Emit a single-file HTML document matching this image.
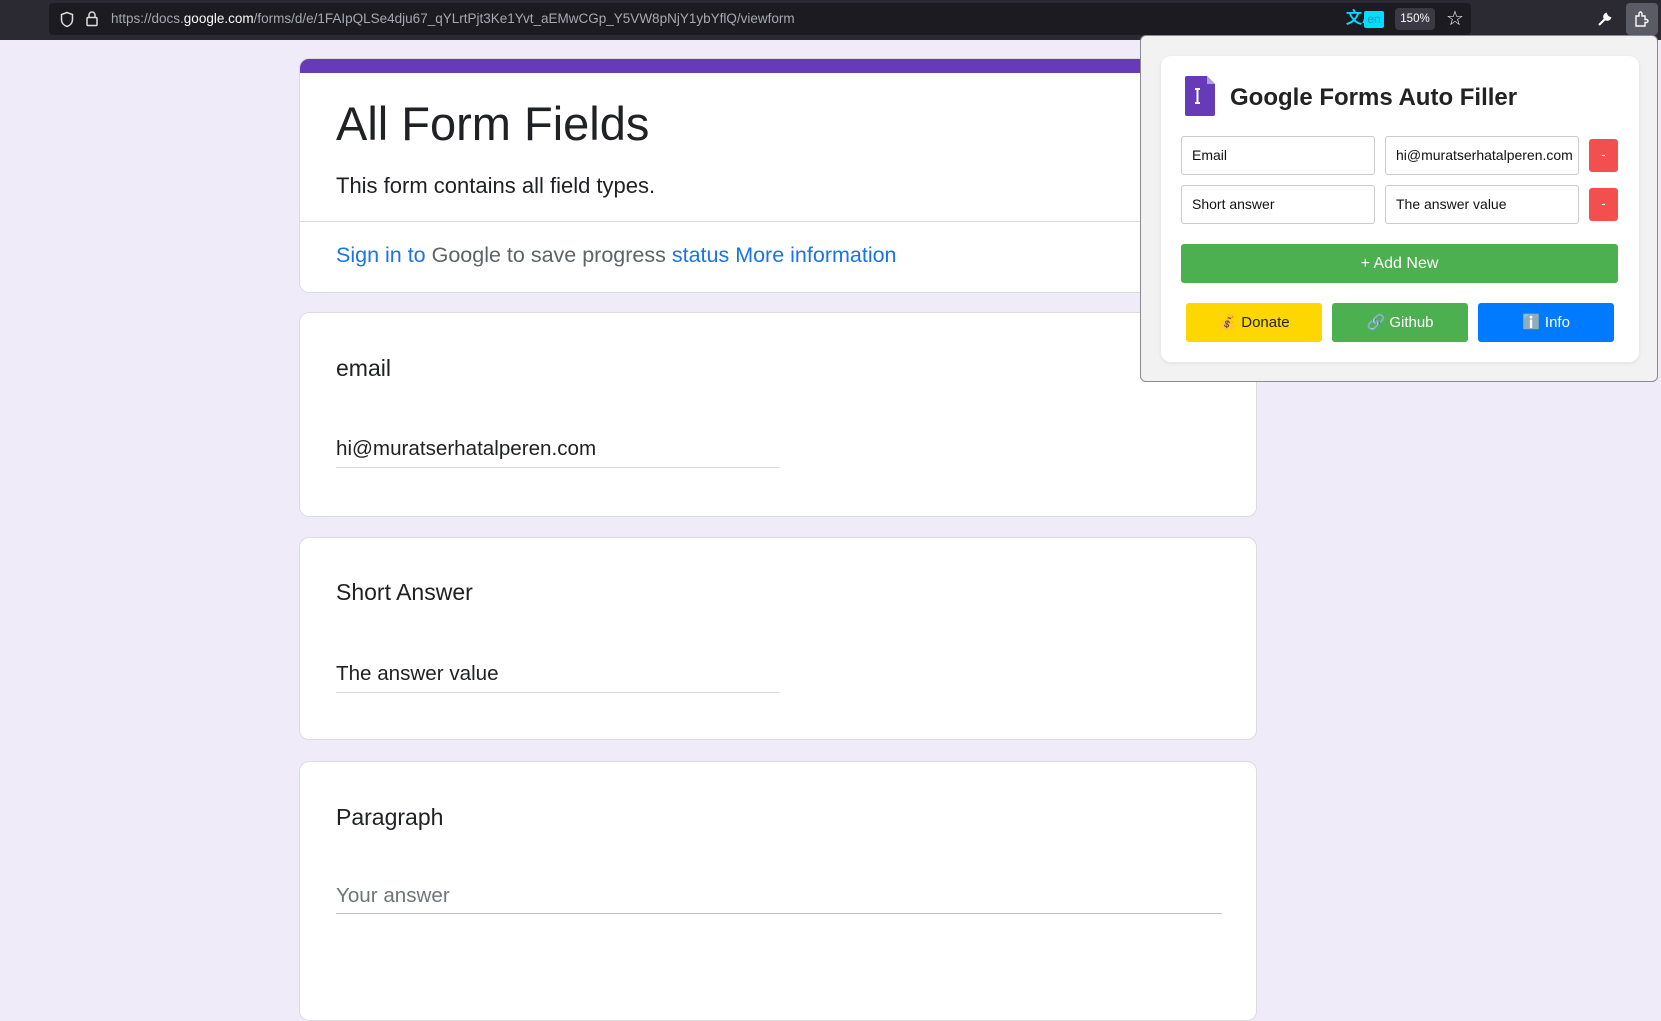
<!DOCTYPE html>
<html><head><meta charset="utf-8"><style>
*{box-sizing:border-box;margin:0;padding:0}
body{width:1661px;height:959px;overflow:hidden;background:#f0ebf8;font-family:"Liberation Sans",Arial,sans-serif;position:relative;color:#202124}
.top{position:absolute;left:0;top:0;width:1661px;height:40px;background:#2b2a33}
.url{position:absolute;left:49px;top:3px;width:1422px;height:32px;background:#1c1b22;border-radius:4px;color:#a8a8b0;font-size:13.5px;line-height:32px}
.card{position:absolute;left:299px;width:958px;background:#fff;border:1px solid #dadce0;border-radius:10px}
.t{position:absolute;left:36px;font-size:23px;color:#202124}
.ans{position:absolute;left:36px;font-size:20.6px}
.line{position:absolute;left:36px;height:1px;background:#dadce0}
.pop{position:absolute;left:1140px;top:35px;width:518px;height:347px;background:#f2f2f3;border:1px solid #8a8a8f;border-radius:6px}
.in{position:absolute;left:20px;width:478px;height:306px;top:20px;background:#fff;border-radius:10px;box-shadow:0 1px 4px rgba(0,0,0,.08)}
.inp{position:absolute;height:39px;width:194px;border:1px solid #ccc;border-radius:3px;font-size:14px;line-height:37px;padding-left:10px;color:#111;white-space:nowrap;overflow:hidden}
.mn{position:absolute;width:29px;height:33px;background:#f44f4f;border-radius:3px;color:#fff;text-align:center;line-height:31px;font-size:13px}
.b{position:absolute;top:247px;height:39px;border-radius:3px;text-align:center;line-height:39px;font-size:15px}
</style></head><body>
<div class="top">
<div class="url">
<svg style="position:absolute;left:10px;top:8px" width="16" height="17" viewBox="0 0 16 17"><path d="M8 1.5L2.5 3.5v5c0 3.5 2.5 6 5.5 7 3-1 5.5-3.5 5.5-7v-5z" fill="none" stroke="#ddd" stroke-width="1.5"/></svg>
<svg style="position:absolute;left:36px;top:7px" width="14" height="17" viewBox="0 0 14 17"><rect x="2" y="7.5" width="10" height="8" rx="1" fill="none" stroke="#ddd" stroke-width="1.5"/><path d="M4 7.5V5a3 3 0 0 1 6 0v2.5" fill="none" stroke="#ddd" stroke-width="1.5"/></svg>
<span style="position:absolute;left:62px">https://docs.<span style="color:#fbfbfe">google.com</span>/forms/d/e/1FAIpQLSe4dju67_qYLrtPjt3Ke1Yvt_aEMwCGp_Y5VW8pNjY1ybYflQ/viewform</span>
<span style="position:absolute;left:1297px;color:#00ddff;font-size:16px;font-weight:bold">文A</span>
<span style="position:absolute;left:1315px;top:8px;width:20px;height:17px;background:#00ddff;color:#1c9bb3;font-size:12px;line-height:17px;text-align:center;border-radius:2px">en</span>
<span style="position:absolute;left:1346px;top:5px;width:40px;height:22px;background:#3a3944;border-radius:4px;color:#fbfbfe;font-size:11.5px;line-height:22px;text-align:center">150%</span>
<span style="position:absolute;left:1397px;color:#fbfbfe;font-size:20px">☆</span>
</div>
<svg style="position:absolute;left:1597px;top:11px" width="16" height="16" viewBox="0 0 16 16"><path d="M2 14l6-6M9 3a3 3 0 1 0 4 4l-2-1-1-1z" stroke="#fbfbfe" stroke-width="2.2" fill="#fbfbfe"/></svg>
<div style="position:absolute;left:1626px;top:3px;width:32px;height:32px;background:#5b5b66;border-radius:4px"><svg style="position:absolute;left:7px;top:7px" width="18" height="18" viewBox="0 0 18 18"><path d="M3 6h3V3.5a1.5 1.5 0 0 1 3 0V6h3v3.5h1.5a1.5 1.5 0 0 1 0 3H12V16H3z" fill="none" stroke="#fbfbfe" stroke-width="1.4"/></svg></div>
</div>

<div class="card" style="top:58px;height:235px;overflow:hidden">
<div style="position:absolute;left:0;top:0;width:100%;height:14px;background:#673ab7"></div>
<div style="position:absolute;left:36px;top:37px;font-size:47px">All Form Fields</div>
<div style="position:absolute;left:36px;top:114px;font-size:22px">This form contains all field types.</div>
<div style="position:absolute;left:0;top:162px;width:100%;height:1px;background:#dadce0"></div>
<div style="position:absolute;left:36px;top:184px;font-size:21.5px;color:#5f6368"><span style="color:#1a73e8">Sign in to</span> Google to save progress <span style="color:#1a73e8">status More information</span></div>
</div>

<div class="card" style="top:312px;height:205px">
<div class="t" style="top:42px">email</div>
<div class="ans" style="top:124px">hi@muratserhatalperen.com</div>
<div class="line" style="top:154px;width:444px"></div>
</div>
<div class="card" style="top:537px;height:203px">
<div class="t" style="top:41px">Short Answer</div>
<div class="ans" style="top:124px">The answer value</div>
<div class="line" style="top:154px;width:444px"></div>
</div>
<div class="card" style="top:761px;height:260px">
<div class="t" style="top:42px">Paragraph</div>
<div class="ans" style="top:122px;color:#70757a">Your answer</div>
<div class="line" style="top:151px;width:886px;background:#bdc1c6"></div>
</div>

<div class="pop"><div class="in">
<svg style="position:absolute;left:24px;top:20px" width="30" height="40" viewBox="0 0 30 40"><path d="M2 0h20l8 8v30a2 2 0 0 1-2 2H2a2 2 0 0 1-2-2V2a2 2 0 0 1 2-2z" fill="#673ab7"/><path d="M22 0l8 8h-8z" fill="#b39ddb"/><path d="M10 13h5M12.5 13v14M10 27h5" stroke="#fff" stroke-width="2"/></svg>
<div style="position:absolute;left:69px;top:28px;font-size:24px;font-weight:bold;color:#222">Google Forms Auto Filler</div>
<div class="inp" style="left:20px;top:80px">Email</div>
<div class="inp" style="left:224px;top:80px">hi@muratserhatalperen.com</div>
<div class="mn" style="left:428px;top:83px">-</div>
<div class="inp" style="left:20px;top:129px">Short answer</div>
<div class="inp" style="left:224px;top:129px">The answer value</div>
<div class="mn" style="left:428px;top:132px">-</div>
<div style="position:absolute;left:20px;top:188px;width:437px;height:39px;background:#4caf50;border-radius:3px;color:#fff;text-align:center;line-height:39px;font-size:16px">+ Add New</div>
<div class="b" style="left:25px;width:136px;background:#ffd700;color:#222">💰 Donate</div>
<div class="b" style="left:171px;width:136px;background:#4caf50;color:#fff">🔗 Github</div>
<div class="b" style="left:317px;width:136px;background:#007bff;color:#fff">ℹ️ Info</div>
</div></div>
</body></html>
